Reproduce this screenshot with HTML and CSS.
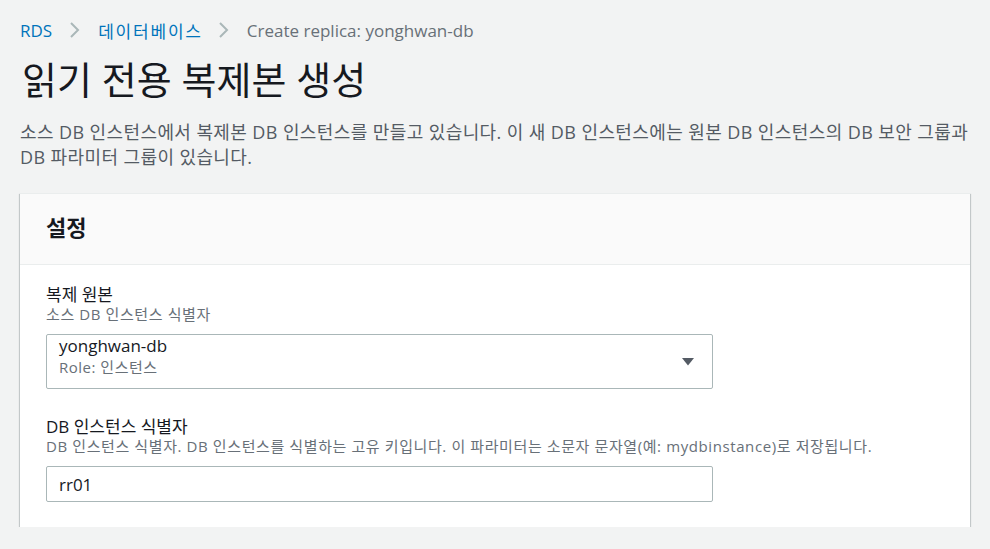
FILE: index.html
```html
<!DOCTYPE html>
<html lang="ko">
<head>
<meta charset="utf-8">
<link rel="stylesheet" href="styles.css">
</head>
<body>
<div class="page">
  <nav class="crumbs">
    <a class="crumb-link">RDS</a>
    <svg class="chev" viewBox="0 0 14 18" width="14" height="18"><path d="M3 2 L10 9 L3 16" fill="none" stroke="#aab7b8" stroke-width="2"/></svg>
    <a class="crumb-link crumb-ko">데이터베이스</a>
    <svg class="chev" viewBox="0 0 14 18" width="14" height="18"><path d="M3 2 L10 9 L3 16" fill="none" stroke="#aab7b8" stroke-width="2"/></svg>
    <span class="crumb-cur">Create replica: yonghwan-db</span>
  </nav>
  <h1 class="title">읽기 전용 복제본 생성</h1>
  <p class="intro">소스 DB 인스턴스에서 복제본 DB 인스턴스를 만들고 있습니다. 이 새 DB 인스턴스에는 원본 DB 인스턴스의 DB 보안 그룹과 DB 파라미터 그룹이 있습니다.</p>

  <section class="card">
    <header class="card-head"><h2>설정</h2></header>
    <div class="card-body">
      <div class="field">
        <div class="label">복제 원본</div>
        <div class="desc">소스 DB 인스턴스 식별자</div>
        <div class="select">
          <div class="sel-text">
            <div class="sel-main">yonghwan-db</div>
            <div class="sel-sub">Role: 인스턴스</div>
          </div>
          <svg class="caret" viewBox="0 0 12 8" width="12" height="8"><path d="M0 0 H12 L6 7.5 Z" fill="#545b64"/></svg>
        </div>
      </div>
      <div class="field">
        <div class="label">DB 인스턴스 식별자</div>
        <div class="desc">DB 인스턴스 식별자. DB 인스턴스를 식별하는 고유 키입니다. 이 파라미터는 소문자 문자열(예: mydbinstance)로 저장됩니다.</div>
        <div class="input">rr01</div>
      </div>
    </div>
  </section>
</div>
</body>
</html>
```
FILE: styles.css
```css
html, body {
  margin: 0;
  padding: 0;
  background: #f2f3f3;
}
body {
  font-family: "Open Sans", "Noto Sans CJK KR", sans-serif;
  color: #16191f;
}
.page {
  padding: 16px 20px 0 20px;
}
.crumbs {
  display: flex;
  align-items: center;
  gap: 16px;
  font-size: 17px;
  height: 28px;
}
.crumb-link { color: #0073bb; }
.crumb-ko { letter-spacing: 1.8px; margin-right: -2px; }
.crumb-cur { color: #687078; }
.chev { display: block; }
.title {
  margin: 11px 0 0 2px;
  font-size: 38px;
  font-weight: 400;
  line-height: 48px;
  color: #16191f;
}
.intro {
  margin: 17px 0 0 0;
  font-size: 18px;
  letter-spacing: 0.4px;
  line-height: 25px;
  color: #545b64;
}
.card {
  margin-top: 23px;
  background: #fff;
  box-shadow: 0 1px 1px 0 rgba(0,28,36,.3), 1px 1px 1px 0 rgba(0,28,36,.15), -1px 1px 1px 0 rgba(0,28,36,.15);
  border-top: 1px solid #eaeded;
}
.card-head {
  background: #fafafa;
  border-bottom: 1px solid #eaeded;
  height: 71px;
  box-sizing: border-box;
  padding: 18px 26px 0 26px;
}
.card-head h2 {
  margin: 0;
  font-size: 22px;
  line-height: 30px;
  font-weight: 700;
}
.card-body {
  padding: 20px 26px 25px 26px;
  display: flex;
  flex-direction: column;
  gap: 28px;
}
.label {
  font-size: 17px;
  line-height: 20px;
  color: #16191f;
}
.desc {
  font-size: 15px;
  letter-spacing: 0.6px;
  line-height: 18px;
  color: #687078;
  margin-bottom: 11px;
}
.select {
  width: 667px;
  height: 55px;
  box-sizing: border-box;
  border: 1px solid #aab7b8;
  border-radius: 2px;
  display: flex;
  align-items: flex-start;
  justify-content: space-between;
  padding: 0 18px 0 12px;
}
.sel-main { font-size: 17px; line-height: 22px; }
.sel-sub { font-size: 15px; letter-spacing: 0.5px; line-height: 20px; color: #687078; }
.caret { display: block; margin-top: 23px; }
.input {
  width: 667px;
  height: 36px;
  box-sizing: border-box;
  border: 1px solid #aab7b8;
  border-radius: 2px;
  padding: 0 12px;
  display: flex;
  align-items: center;
  font-size: 17px;
}
```
